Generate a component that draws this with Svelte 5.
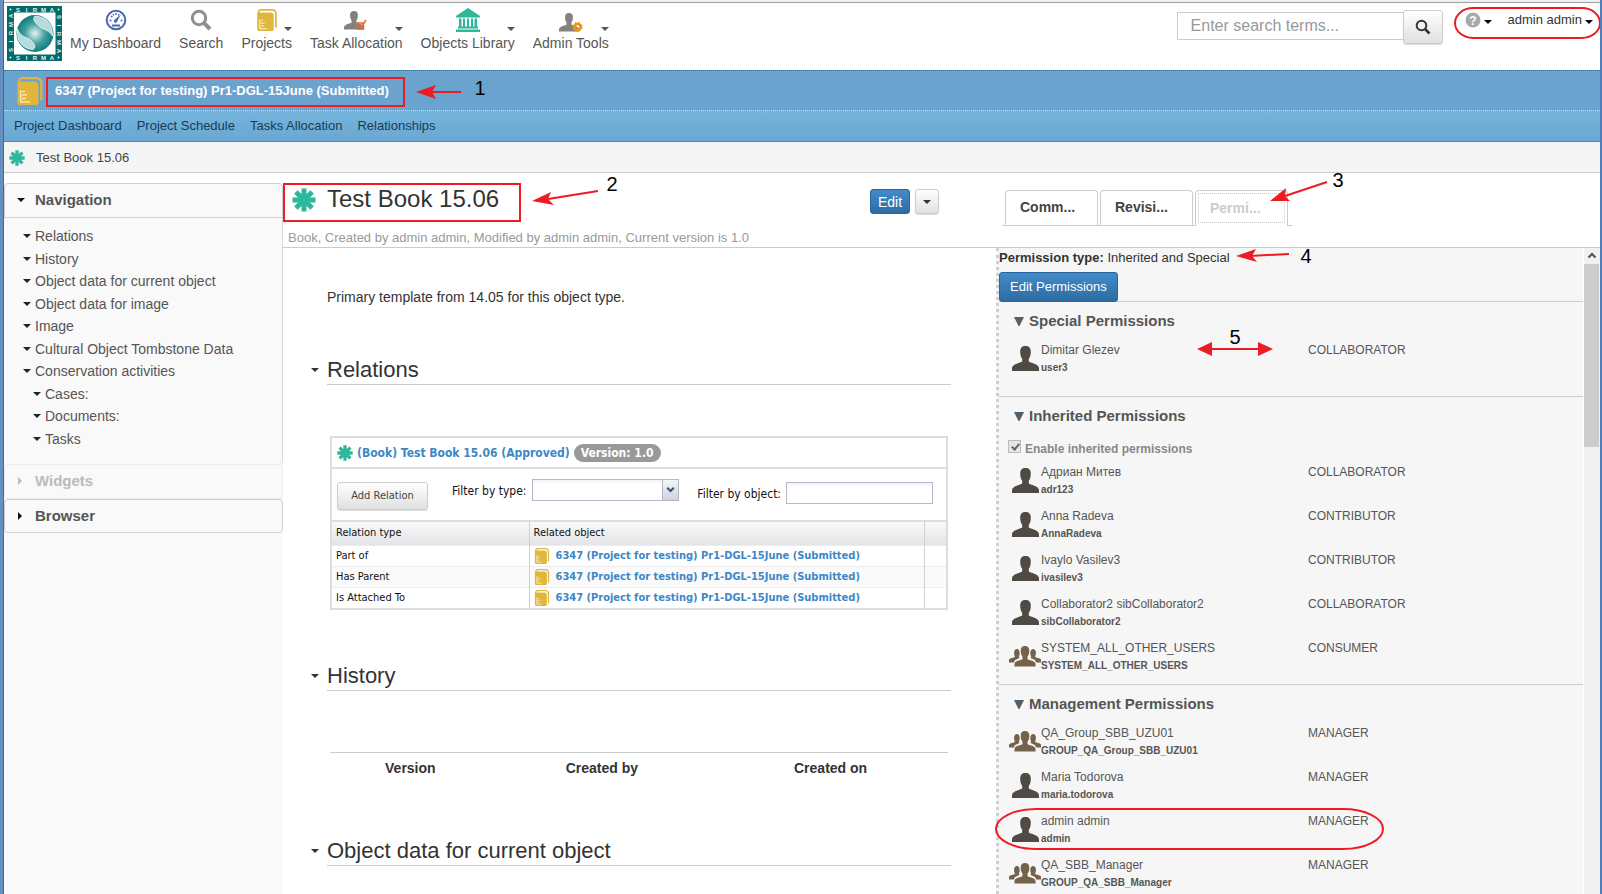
<script>
  const menu = [
    { label: 'My Dashboard', icon: 'gauge', caret: false },
    { label: 'Search', icon: 'search', caret: false },
    { label: 'Projects', icon: 'book', caret: true },
    { label: 'Task Allocation', icon: 'task', caret: true },
    { label: 'Objects Library', icon: 'library', caret: true },
    { label: 'Admin Tools', icon: 'admin', caret: true }
  ];
  const projectLinks = ['Project Dashboard', 'Project Schedule', 'Tasks Allocation', 'Relationships'];
  const tree = [
    { label: 'Relations' },
    { label: 'History' },
    { label: 'Object data for current object' },
    { label: 'Object data for image' },
    { label: 'Image' },
    { label: 'Cultural Object Tombstone Data' },
    { label: 'Conservation activities' },
    { label: 'Cases:', nested: true },
    { label: 'Documents:', nested: true },
    { label: 'Tasks', nested: true }
  ];
  const project = '6347 (Project for testing) Pr1-DGL-15June (Submitted)';
  const relations = ['Part of', 'Has Parent', 'Is Attached To'];
  const groups = [
    {
      title: 'Special Permissions',
      users: [{ name: 'Dimitar Glezev', id: 'user3', role: 'COLLABORATOR' }]
    },
    {
      title: 'Inherited Permissions',
      toggle: true,
      users: [
        { name: 'Адриан Митев', id: 'adr123', role: 'COLLABORATOR' },
        { name: 'Anna Radeva', id: 'AnnaRadeva', role: 'CONTRIBUTOR' },
        { name: 'Ivaylo Vasilev3', id: 'ivasilev3', role: 'CONTRIBUTOR' },
        { name: 'Collaborator2 sibCollaborator2', id: 'sibCollaborator2', role: 'COLLABORATOR' },
        { name: 'SYSTEM_ALL_OTHER_USERS', id: 'SYSTEM_ALL_OTHER_USERS', role: 'CONSUMER', group: true }
      ]
    },
    {
      title: 'Management Permissions',
      users: [
        { name: 'QA_Group_SBB_UZU01', id: 'GROUP_QA_Group_SBB_UZU01', role: 'MANAGER', group: true },
        { name: 'Maria Todorova', id: 'maria.todorova', role: 'MANAGER' },
        { name: 'admin admin', id: 'admin', role: 'MANAGER' },
        { name: 'QA_SBB_Manager', id: 'GROUP_QA_SBB_Manager', role: 'MANAGER', group: true }
      ]
    }
  ];
</script>

{#snippet star(size)}
  <svg width={size} height={size} viewBox="0 0 24 24" aria-hidden="true">
    <g stroke="#2db79b" stroke-width="5">
      <path d="M12 0.5V23.5M0.5 12H23.5M3.9 3.9L20.1 20.1M20.1 3.9L3.9 20.1" />
    </g>
  </svg>
{/snippet}

{#snippet book(size)}
  <svg width={size} height={size} viewBox="0 0 28 28" aria-hidden="true">
    <path d="M3.5 5.5V3.5Q3.5 1.2 6 1.2H20Q25.3 1.2 25.3 6.5V23.5" fill="none" stroke="#e0b73c" stroke-width="2.2" />
    <path d="M1.5 4.5H18.5Q22.5 4.5 22.5 8.5V26Q22.5 28 20.5 28H3.5Q1.5 28 1.5 26Z" fill="#e0b73c" />
    <path d="M4.6 13V25.5M6 14.5H9M6 18H11M6 21.5H10M5 25H14" stroke="#f6e7b8" stroke-width="1.5" fill="none" />
  </svg>
{/snippet}

{#snippet person(color)}
  <path d="M13.5 0C17 0 18.8 2 18.8 5.5C18.8 9.5 17.8 11.5 16.8 12.8V15.5C18 17 27 17.500 27 22.500V25H0V22.500C0 17.500 9 17 10.200 15.500V12.800C9.200 11.500 8.200 9.500 8.200 5.500C8.200 2 10 0 13.500 0Z" fill={color} />
{/snippet}

{#snippet caret()}
  <svg class="caret" width="8" height="4" viewBox="0 0 8 4" aria-hidden="true"><path d="M0 0H8L4 4Z" fill="currentColor" /></svg>
{/snippet}

<div class="window">
  <header class="top">
    <a class="logo" href="#home" aria-label="Sirma">
      <svg width="55" height="55" viewBox="0 0 55 55">
        <defs>
          <radialGradient id="globe" cx="50%" cy="50%" r="55%">
            <stop offset="0" stop-color="#e8f5f4" />
            <stop offset="0.5" stop-color="#3fa09d" />
            <stop offset="1" stop-color="#067572" />
          </radialGradient>
        </defs>
        <rect width="55" height="55" fill="#046a67" />
        <rect x="7" y="6.500" width="41.500" height="42" fill="#fff" />
        <circle cx="28" cy="27.500" r="18.500" fill="url(#globe)" />
        <path d="M28 10C40 11 46 18 45.500 30C42 24 37 24 33 21C28 17 25 13 28 10Z" fill="#b6dbdc" stroke="#e9f6f6" stroke-width="0.800" />
        <path d="M10.500 23C13 30 18 31 22 33C27 36 30 41 26 43.500C15 43 9 34 10.500 23Z" fill="#b6dbdc" stroke="#e9f6f6" stroke-width="0.800" />
        <g fill="#e6f3f2" font-family="Liberation Sans" font-weight="bold" font-size="6" text-anchor="middle">
          {#each ['S', 'I', 'R', 'M', 'A'] as letter, i}
            <text x={11 + i * 8.5} y="5.500">{letter}</text>
            <text x={11 + i * 8.5} y="54">{letter}</text>
            <text transform="translate(5.500 {44 - i * 8.5}) rotate(-90)">{letter}</text>
            <text transform="translate(49.800 {11 + i * 8.5}) rotate(90)">{letter}</text>
          {/each}
          <circle cx="3.500" cy="3.500" r="1" /><circle cx="51.500" cy="3.500" r="1" />
          <circle cx="3.500" cy="51.500" r="1" /><circle cx="51.500" cy="51.500" r="1" />
        </g>
      </svg>
    </a>

    <nav class="menu" aria-label="Main">
      {#each menu as item}
        <a href="#menu">
          <span class="glyph">
            {#if item.icon === 'gauge'}
              <svg width="22" height="22" viewBox="0 0 22 22">
                <circle cx="11" cy="11" r="9.300" fill="#fff" stroke="#4a69ae" stroke-width="2" />
                <path d="M4.500 11.500H6.500M15.500 11.500H17.500M6 7L7.500 8.200M11 4V6M8 5L8.800 6.500M14 5L13.300 6.500" stroke="#4a69ae" stroke-width="1.400" />
                <path d="M15.800 5.500L12.300 12.200A1.700 1.700 0 1 1 9.800 10.500Z" fill="#4a69ae" />
                <path d="M7 16.500H15" stroke="#4a69ae" stroke-width="2" />
              </svg>
            {:else if item.icon === 'search'}
              <svg width="22" height="22" viewBox="0 0 22 22" fill="none" stroke="#8f8f8f">
                <circle cx="9" cy="9" r="6.700" stroke-width="3" /><path d="M13.800 13.800L20 20" stroke-width="4" />
              </svg>
            {:else if item.icon === 'book'}
              {@render book(22)}
            {:else if item.icon === 'task'}
              <svg width="24" height="22" viewBox="0 0 24 22">
                <g transform="translate(0 2) scale(0.74)">{@render person('#85807a')}</g>
                <path d="M13.500 14H19.500M13.500 13V20H19.500V16M15.500 15.500L17.500 18L22 11" fill="none" stroke="#e2683c" stroke-width="1.500" />
              </svg>
            {:else if item.icon === 'library'}
              <svg width="24" height="24" viewBox="0 0 24 24" fill="#2db79b">
                <path d="M12 0L24 8V9.500H0V8ZM3 10.500H5.500V19H3ZM7 10.500H9V19H7ZM11 10.500H13V19H11ZM15 10.500H17V19H15ZM18.500 10.500H21V19H18.500ZM2 18.500H22V20.500H2ZM0 21.500H24V24H0Z" />
              </svg>
            {:else}
              <svg width="24" height="24" viewBox="0 0 24 24">
                <g transform="translate(0 5) scale(0.74)">{@render person('#85807a')}</g>
                <circle cx="18.500" cy="19" r="3" fill="none" stroke="#f0960f" stroke-width="2.600" />
                <circle cx="18.500" cy="19" r="4.200" fill="none" stroke="#f0960f" stroke-width="1.600" stroke-dasharray="2 1.300" />
              </svg>
            {/if}
            {#if item.caret}{@render caret()}{/if}
          </span>
          {item.label}
        </a>
      {/each}
    </nav>

    <form class="search">
      <input type="text" placeholder="Enter search terms..." aria-label="Search terms" />
      <button type="button" aria-label="Search">
        <svg width="16" height="16" viewBox="0 0 16 16" fill="none" stroke="#333">
          <circle cx="6.500" cy="6.500" r="4.800" stroke-width="2" /><path d="M10 10L14.500 14.500" stroke-width="2.600" />
        </svg>
      </button>
    </form>

    <div class="account">
      <button type="button" aria-label="Help">
        <svg width="16" height="16" viewBox="0 0 16 16">
          <circle cx="8" cy="8" r="7.500" fill="#a9a9a9" />
          <text x="8" y="12.500" text-anchor="middle" font-family="Liberation Sans" font-weight="bold" font-size="12" fill="#fff">?</text>
        </svg>
        {@render caret()}
      </button>
      <button type="button">admin admin {@render caret()}</button>
    </div>
  </header>

  <div class="project">{@render book(28)}<a href="#project">{project}</a></div>
  <nav class="project-nav" aria-label="Project">
    {#each projectLinks as link}<a href="#project">{link}</a>{/each}
  </nav>
  <div class="crumb">{@render star(16)}<a href="#book">Test Book 15.06</a></div>

  <div class="content">
    <aside class="side">
      <h2>{@render caret()}Navigation</h2>
      <ul>
        {#each tree as node}
          <li class:nested={node.nested}>{@render caret()}<a href="#section">{node.label}</a></li>
        {/each}
      </ul>
      <h2 class="closed muted">
        <svg width="4" height="8" viewBox="0 0 4 8"><path d="M0 0L4 4L0 8Z" fill="currentColor" /></svg>Widgets
      </h2>
      <h2 class="closed last">
        <svg width="4" height="8" viewBox="0 0 4 8"><path d="M0 0L4 4L0 8Z" fill="currentColor" /></svg>Browser
      </h2>
    </aside>

    <main>
      <div class="heading">
        <div class="title">
          {@render star(24)}
          <h1>Test Book 15.06</h1>
          <button type="button" class="blue edit">Edit</button>
          <button type="button" class="grey more" aria-label="More actions">{@render caret()}</button>
        </div>
        <p>Book, Created by admin admin, Modified by admin admin, Current version is 1.0</p>
      </div>

      <div class="body">
        <p class="intro">Primary template from 14.05 for this object type.</p>

        <h2>{@render caret()}Relations</h2>
        <section class="relations">
          <div class="object">
            {@render star(16)}<a href="#book">(Book) Test Book 15.06 (Approved)</a><span>Version: 1.0</span>
          </div>
          <div class="tools">
            <button type="button" class="grey">Add Relation</button>
            <label for="by-type">Filter by type:</label>
            <span class="combo">
              <select id="by-type"><option></option></select>
              <svg width="16" height="20" viewBox="0 0 16 20"><path d="M4.500 7.500L8 11L11.500 7.500" fill="none" stroke="#33508c" stroke-width="2.200" /></svg>
            </span>
            <label for="by-object" class="second">Filter by object:</label>
            <input id="by-object" type="text" />
          </div>
          <table>
            <thead><tr><th>Relation type</th><th>Related object</th><th aria-label="Actions"></th></tr></thead>
            <tbody>
              {#each relations as kind}
                <tr>
                  <td>{kind}</td>
                  <td><span class="linked">{@render book(16)}<a href="#project">{project}</a></span></td>
                  <td></td>
                </tr>
              {/each}
            </tbody>
          </table>
        </section>

        <h2>{@render caret()}History</h2>
        <table class="history">
          <thead><tr><th>Version</th><th>Created by</th><th>Created on</th></tr></thead>
        </table>

        <h2>{@render caret()}Object data for current object</h2>
      </div>
    </main>

    <section class="right">
      <div class="tabs">
        <div role="tablist">
          <button type="button" role="tab">Comm...</button>
          <button type="button" role="tab">Revisi...</button>
          <button type="button" role="tab" class="active" aria-selected="true">Permi...</button>
        </div>
      </div>
      <div class="scroll">
        <div class="panel">
          <p class="kind"><b>Permission type:</b> Inherited and Special</p>
          <div class="action"><button type="button" class="blue">Edit Permissions</button></div>
          {#each groups as group}
            <section class="group">
              <h3><svg width="10" height="9" viewBox="0 0 10 9"><path d="M0 0H10L5.500 9H4.500Z" fill="#52606b" /></svg>{group.title}</h3>
              {#if group.toggle}
                <label class="toggle">
                  <input type="checkbox" checked disabled />
                  Enable inherited permissions
                </label>
              {/if}
              {#each group.users as user}
                <div class="user">
                  {#if user.group}
                    <svg class="people" width="32" height="21" viewBox="0 0 32 21" fill="#75624b">
                      <path d="M0 16.500V13.500C1 12 5 12 6 10.500C4.500 8.500 4.500 3 8 3C11 3 11.300 8.500 9.800 10.500L10.500 12L6 14L4.800 16.500Z" />
                      <path d="M32 16.500V13.500C31 12 27 12 26 10.500C27.500 8.500 27.500 3 24 3C21 3 20.700 8.500 22.200 10.500L21.500 12L26 14L27.200 16.500Z" />
                      <path d="M16 0C19 0 20.300 1.800 20.300 4.800C20.300 8 19.300 9.800 18.500 10.500V13C19.500 14.500 26.500 14.500 26.500 18V20.500H5.500V18C5.500 14.500 12.500 14.500 13.500 13V10.500C12.700 9.800 11.700 8 11.700 4.800C11.700 1.800 13 0 16 0Z" />
                    </svg>
                  {:else}
                    <svg width="27" height="25" viewBox="0 0 27 25">{@render person('#4f4b44')}</svg>
                  {/if}
                  <div><span>{user.name}</span><b>{user.id}</b></div>
                  <span>{user.role}</span>
                </div>
              {/each}
            </section>
          {/each}
        </div>
        <div class="bar" aria-hidden="true">
          <svg width="16" height="16" viewBox="0 0 16 16"><path d="M4.500 9.500L8 6L11.500 9.500" fill="none" stroke="#505050" stroke-width="2" /></svg>
          <i></i>
        </div>
      </div>
    </section>
  </div>

  <svg class="notes" width="1602" height="894" viewBox="0 0 1602 894" aria-hidden="true">
    <g fill="none" stroke="#ed1c24" stroke-width="2">
      <rect x="47" y="78" width="357" height="28" />
      <rect x="284" y="184" width="236" height="37" />
      <rect x="1455" y="8" width="145" height="30" rx="18" ry="15" />
      <rect x="996" y="809" width="387" height="40" rx="40" ry="20" />
      <path d="M430 92H461M548 199L598 191M1285 196L1327 182M1250 256L1289 254M1208 349H1262" />
    </g>
    <g fill="#ed1c24">
      <path d="M416 92L436 85L432 92L436 99ZM532 201L551 192L548 199L554 205ZM1270 201L1286 188L1285 196L1290 201ZM1236 256L1256 249L1252 256L1257 262ZM1197 349L1212 342V356ZM1273 349L1258 342V356Z" />
    </g>
    <g font-family="Liberation Sans" font-size="20" text-anchor="middle">
      <text x="480" y="95">1</text><text x="612" y="191">2</text><text x="1338" y="187">3</text>
      <text x="1306" y="263">4</text><text x="1235" y="344">5</text>
    </g>
  </svg>
</div>

<style>
  :global(body) { margin: 0; overflow: hidden; }
  .window, .window :global(*) { box-sizing: border-box; }
  .window {
    position: relative; display: flex; flex-direction: column; height: 100vh; overflow: hidden;
    padding-left: 4px; border-right: 2px solid #4f7db8;
    background: linear-gradient(90deg, #6690c0 3px, #44688f 3px, #44688f 4px, #fff 4px);
    color: #333; font: 14px/20px "Liberation Sans", Arial, sans-serif;
  }
  a { color: inherit; text-decoration: none; }
  h1, h2, h3, p, ul { margin: 0; padding: 0; font-weight: normal; list-style: none; }
  svg { display: block; flex: none; }
  button, input, select { font: inherit; color: inherit; margin: 0; }
  button { cursor: pointer; }

  .top { display: flex; height: 70px; flex: none; padding-top: 3px; background: linear-gradient(#f0f0f0 2px, #a0a0a0 2px, #a0a0a0 3px, #fff 3px); align-items: flex-start; }
  .logo { margin: 3px 0 0 3px; }
  .menu { display: flex; gap: 18px; margin-left: 8px; color: #555; }
  .menu a { display: flex; flex-direction: column; line-height: 16px; padding-top: 5px; }
  .glyph { position: relative; display: flex; justify-content: center; align-items: center; height: 24px; margin-bottom: 3px; }
  .glyph .caret { position: absolute; right: 0; top: 19px; }
  .search { display: flex; align-items: flex-start; margin: 7px 10px 0 auto; }
  .search input { width: 227px; height: 28px; margin-top: 2px; border: 1px solid #ccc; padding: 0 13px; font-size: 16px; background: #fff; }
  .search input::placeholder { color: #999; opacity: 1; }
  .search button { display: grid; place-items: center; width: 40px; height: 34px; margin-left: -1px; padding: 0; }
  .search button, .grey { border: 1px solid #ccc; border-radius: 3px; background: linear-gradient(#fff, #e0e0e0); box-shadow: 0 1px 1px #ddd; }
  .account { display: flex; gap: 16px; padding: 7px 7px 0 12px; font-size: 13px; }
  .account button { display: flex; align-items: center; gap: 3px; height: 20px; padding: 0; border: 0; background: none; }
  .account .caret { color: #000; margin-top: 4px; }

  .project { display: flex; flex: none; align-items: center; gap: 11px; height: 41px; padding-left: 12px; border-top: 1px dotted #3b6a60; border-bottom: 1px dotted #c9dff0; background: #6ba3cf; }
  .project a { color: #fff; font-size: 13px; font-weight: bold; }
  .project-nav { display: flex; flex: none; align-items: center; gap: 15px; height: 31px; padding: 0 10px; border-bottom: 1px solid #4b8ab5; background: linear-gradient(#75b5dc, #6aa6d1); color: #173b56; font-size: 13px; }
  .crumb { display: flex; flex: none; align-items: center; gap: 11px; height: 31px; padding: 1px 0 0 5px; border-bottom: 1px solid #ccc; background: #f5f5f5; color: #444; font-size: 13px; }

  .content { display: grid; flex: 1; grid-template-columns: 279px 1fr 604px; min-height: 0; }
  .side { display: flex; flex-direction: column; margin-top: 10px; background: #f9f9f9; color: #555; }
  .side h2 { display: flex; align-items: center; gap: 10px; height: 35px; padding: 0 0 2px 12px; border: 1px solid #d0d0d0; border-radius: 4px 4px 0 0; color: #555; font-size: 15px; font-weight: bold; }
  .side h2 svg { color: #111; }
  .side .closed { gap: 13px; padding-left: 13px; border-radius: 4px; }
  .side .muted, .side .muted svg { border-color: #ececec; color: #bbb; }
  .side .last { height: 34px; padding-bottom: 0; }
  .side ul { display: grid; grid-auto-rows: 1fr; height: 246px; padding: 7px 0 14px 19px; border-right: 1px solid #d8d8d8; border-radius: 0 0 4px 0; }
  .side li { display: flex; align-items: center; gap: 4px; }
  .side li svg { color: #222; }
  .side .nested { padding-left: 10px; }

  main { min-width: 0; }
  .heading { height: 75px; border-bottom: 1px solid #ccc; padding: 10px 0 0 5px; }
  .title { display: flex; align-items: center; height: 37px; padding: 0 57px 0 4px; }
  .title h1 { margin-left: 11px; font-size: 24px; line-height: 28px; margin-top: -5px; }
  .title > svg { margin-top: -3px; }
  .blue { border: 1px solid #2a659b; border-radius: 3px; background: linear-gradient(#428bca, #2d6ca2); color: #fff; }
  .edit { height: 25px; margin: 0 5px 0 auto; padding: 0 7px; width: 40px; line-height: 20px; }
  .more { display: grid; place-items: center; width: 24px; height: 25px; padding: 0; }
  .heading p { margin-top: 7px; color: #999; font-size: 13px; line-height: 22px; }
  .body { padding: 0 45px 0 44px; }
  .intro { margin: 39px 0 49px; }
  .body h2 { display: flex; align-items: center; height: 29px; border-bottom: 1px solid #ccc; font-size: 22px; line-height: 28px; }
  .body h2 svg { margin: 0 8px 0 -16px; }
  .relations { margin: 51px 3px 52px; border: 2px solid #ddd; color: #111; font: 11px/14px "DejaVu Sans Condensed", Tahoma, sans-serif; }
  .relations a { color: #3d87c7; font-weight: bold; }
  .object { display: flex; align-items: center; gap: 4px; height: 31px; padding-left: 5px; border-bottom: 2px solid #ddd; font-size: 12px; }
  .object span { padding: 2px 7px; border-radius: 9px; background: #999; color: #fff; font-weight: bold; }
  .tools { display: flex; align-items: flex-start; height: 53px; padding: 10px 13px 0 5px; border-bottom: 2px solid #ddd; font-size: 12px; }
  .tools button { height: 28px; width: 91px; margin: 3px 24px 0 0; padding: 0; color: #444; font-size: 11px; flex: none; }
  .tools label { margin-top: 5px; white-space: nowrap; }
  .tools .second { margin: 8px 5px 0 auto; }
  .tools input, .combo { width: 147px; height: 22px; border: 1px solid #b5b8c8; background: linear-gradient(#f2f2f2, #fff 4px); }
  .tools input { margin-top: 3px; padding: 0 4px; }
  .combo { display: flex; margin-left: 5px; }
  .combo select { flex: 1; min-width: 0; border: 0; background: none; appearance: none; }
  .combo svg { border-left: 1px solid #b5b8c8; background: linear-gradient(#f5f5f5, #d0d3da); pointer-events: none; }
  .body table { width: 100%; border-collapse: collapse; table-layout: fixed; }
  .relations th { height: 23px; background: linear-gradient(#f9f9f9, #e3e4e6); font-weight: normal; text-align: left; }
  .relations td { height: 21px; border-top: 1px solid #ededed; }
  .relations tr:nth-child(even) td { background: #fafafa; }
  .relations th, .relations td { padding: 0 4px; }
  .relations th + th, .relations td + td { border-left: 1px solid #d0d0d0; }
  .relations th:first-child { width: 197px; }
  .relations th:last-child { width: 22px; }
  .linked { display: flex; align-items: center; gap: 6px; white-space: nowrap; }
  .relations + h2 { margin-bottom: 61px; }
  .body .history { width: auto; min-width: calc(100% - 6px); margin: 0 3px 53px; border-top: 1px solid #ccc; }
  .history th { height: 31px; padding: 0; font-size: 14px; }
  .history th:nth-child(1) { width: 26%; }
  .history th:nth-child(2) { width: 36%; }

  .right { display: flex; flex-direction: column; min-height: 0; min-width: 0; }
  .tabs { flex: none; height: 75px; padding: 17px 0 0 6px; border-bottom: 1px solid #ccc; }
  .tabs > div { display: flex; gap: 2px; width: 290px; height: 36px; padding: 0 3px; border-bottom: 1px solid #ccc; }
  .tabs button { width: 93px; height: 35px; padding: 0 14px 2px; border: 1px solid #ccc; border-bottom: 0; border-radius: 4px 4px 0 0; background: #fff; color: #444; font-weight: bold; text-align: left; }
  .tabs .active { height: 36px; outline: 1px dotted #ccc; outline-offset: -4px; color: #ccc; }
  .scroll { display: flex; flex: 1; min-height: 0; }
  .panel { flex: 1; overflow: hidden; border-left: 3px dotted #d0d0d0; background: #f6f6f6; margin-right: 1px; }
  .kind { font-size: 13px; line-height: 20px; }
  .action { display: flex; margin-top: 4px; border-bottom: 1px solid #ccc; font-size: 13px; }
  .action button { height: 30px; padding: 0 10px; margin-bottom: -1px; }
  .group { padding: 7px 0 17px 9px; }
  .group + .group { border-top: 1px solid #ccc; padding-bottom: 7px; }
  .group h3 { display: flex; align-items: center; gap: 5px; height: 24px; margin-bottom: 2px; padding-left: 6px; color: #555; font-size: 15px; font-weight: bold; }
  .toggle { display: flex; align-items: center; gap: 4px; height: 17px; margin-top: 12px; color: #888; font-size: 12px; font-weight: bold; }
  .toggle input { appearance: none; width: 13px; height: 13px; margin-top: -4px; border: 1px solid #bbb; background: #e6e6e6; }
  .toggle input::after { content: ""; display: block; width: 3px; height: 6px; margin: 1px 0 0 4px; border: solid #666; border-width: 0 2px 2px 0; transform: rotate(40deg); }
  .user { display: grid; grid-template-columns: 33px 267px 1fr; height: 44px; padding-top: 5px; color: #555; font-size: 12px; line-height: 20px; }
  .user > svg { margin: 6px 0 0 4px; }
  .user .people { margin: 8px 0 0 1px; }
  .user div { display: flex; flex-direction: column; }
  .user b { font-size: 10px; line-height: 16px; }
  .bar { width: 16px; background: #f0f0f0; }
  .bar i { display: block; height: 183px; margin-right: 1px; background: #cdcdcd; }
  .notes { position: absolute; top: 0; left: 0; pointer-events: none; }
</style>
